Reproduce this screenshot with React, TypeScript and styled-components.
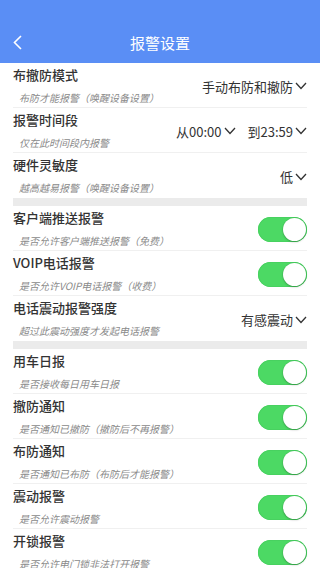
import React from "react";
import styled, { createGlobalStyle } from "styled-components";

const Global = createGlobalStyle`
  html, body { margin: 0; padding: 0; background: #ffffff; }
  body {
    font-family: "Noto Sans CJK SC", "Noto Sans", sans-serif;
    color: #333;
    -webkit-font-smoothing: antialiased;
  }
  * { box-sizing: border-box; }
`;

const Page = styled.div`
  width: 320px;
  min-height: 568px;
  background: #fff;
`;

const Header = styled.header`
  height: 63px;
  padding-top: 22px;
  background: #5a8ef5;
  display: grid;
  grid-template-columns: 40px 1fr 40px;
  align-items: center;
`;

const BackButton = styled.button`
  height: 41px;
  border: 0;
  background: transparent;
  padding: 0 0 0 13px;
  display: flex;
  align-items: center;
  cursor: pointer;
`;

const HeaderTitle = styled.h1`
  margin: 0;
  font-size: 15px;
  font-weight: 400;
  color: #fff;
  text-align: center;
  line-height: 41px;
`;

const List = styled.div`
  padding: 0 13px;
`;

const Section = styled.section`
  display: flex;
  flex-direction: column;
`;

const SectionGap = styled.div`
  height: 8px;
  background: #ebebeb;
`;

const Row = styled.div`
  height: 45px;
  display: flex;
  justify-content: space-between;
  border-bottom: 1px solid #f0f0f0;
  &:last-child { border-bottom: 0; }
`;

const TextCol = styled.div`
  display: flex;
  flex-direction: column;
  padding-top: 3px;
`;

const Title = styled.div`
  font-size: 13px;
  line-height: 17px;
  font-weight: 500;
  color: #333;
  white-space: nowrap;
`;

const Sub = styled.div`
  margin-top: 8px;
  padding-left: 6px;
  font-size: 10px;
  line-height: 13px;
  font-style: italic;
  color: #8a8a8a;
  white-space: nowrap;
`;

const Control = styled.div`
  display: flex;
  align-items: center;
  gap: 12px;
  padding-top: 2px;
`;

const Picker = styled.div`
  display: flex;
  align-items: center;
  gap: 2px;
  font-size: 13px;
  color: #333;
  white-space: nowrap;
`;

const SwitchTrack = styled.div<{ $on: boolean }>`
  position: relative;
  width: 49px;
  height: 25px;
  border-radius: 13px;
  background: ${(p) => (p.$on ? "#4cd964" : "#e5e5e5")};
  box-shadow: inset 0 0 0 1px ${(p) => (p.$on ? "#48d160" : "#dcdcdc")};
`;

const Knob = styled.div<{ $on: boolean }>`
  position: absolute;
  top: 1px;
  left: ${(p) => (p.$on ? "25px" : "1px")};
  width: 23px;
  height: 23px;
  border-radius: 50%;
  background: #fff;
  box-shadow: 0 1px 2px rgba(0, 0, 0, 0.25), 0 0 0 0.5px rgba(0, 0, 0, 0.08);
`;

const Chevron = () => (
  <svg width="12" height="8" viewBox="0 0 12 8" fill="none">
    <polyline points="1,1 6,6.5 11,1" stroke="#333" strokeWidth="1.3" fill="none" />
  </svg>
);

const BackIcon = () => (
  <svg width="9" height="15" viewBox="0 0 9 15" fill="none">
    <polyline points="8,1 1.5,7.5 8,14" stroke="#fff" strokeWidth="1.6" fill="none" />
  </svg>
);

const Switch = ({ on }: { on: boolean }) => (
  <SwitchTrack $on={on}>
    <Knob $on={on} />
  </SwitchTrack>
);

type Item = {
  title: string;
  sub: string;
  pickers?: string[];
  toggle?: boolean;
};

const sections: Item[][] = [
  [
    { title: "布撤防模式", sub: "布防才能报警（唤醒设备设置）", pickers: ["手动布防和撤防"] },
    { title: "报警时间段", sub: "仅在此时间段内报警", pickers: ["从00:00", "到23:59"] },
    { title: "硬件灵敏度", sub: "越高越易报警（唤醒设备设置）", pickers: ["低"] },
  ],
  [
    { title: "客户端推送报警", sub: "是否允许客户端推送报警（免费）", toggle: true },
    { title: "VOIP电话报警", sub: "是否允许VOIP电话报警（收费）", toggle: true },
    { title: "电话震动报警强度", sub: "超过此震动强度才发起电话报警", pickers: ["有感震动"] },
  ],
  [
    { title: "用车日报", sub: "是否接收每日用车日报", toggle: true },
    { title: "撤防通知", sub: "是否通知已撤防（撤防后不再报警）", toggle: true },
    { title: "布防通知", sub: "是否通知已布防（布防后才能报警）", toggle: true },
    { title: "震动报警", sub: "是否允许震动报警", toggle: true },
    { title: "开锁报警", sub: "是否允许电门锁非法打开报警", toggle: true },
  ],
];

export default function App() {
  return (
    <Page>
      <Global />
      <Header>
        <BackButton aria-label="返回">
          <BackIcon />
        </BackButton>
        <HeaderTitle>报警设置</HeaderTitle>
        <span />
      </Header>
      <List>
        {sections.map((items, si) => (
          <React.Fragment key={si}>
            {si > 0 && <SectionGap />}
            <Section>
              {items.map((it) => (
                <Row key={it.title}>
                  <TextCol>
                    <Title>{it.title}</Title>
                    <Sub>{it.sub}</Sub>
                  </TextCol>
                  <Control>
                    {it.pickers?.map((p) => (
                      <Picker key={p}>
                        {p}
                        <Chevron />
                      </Picker>
                    ))}
                    {it.toggle !== undefined && <Switch on={it.toggle} />}
                  </Control>
                </Row>
              ))}
            </Section>
          </React.Fragment>
        ))}
      </List>
    </Page>
  );
}
